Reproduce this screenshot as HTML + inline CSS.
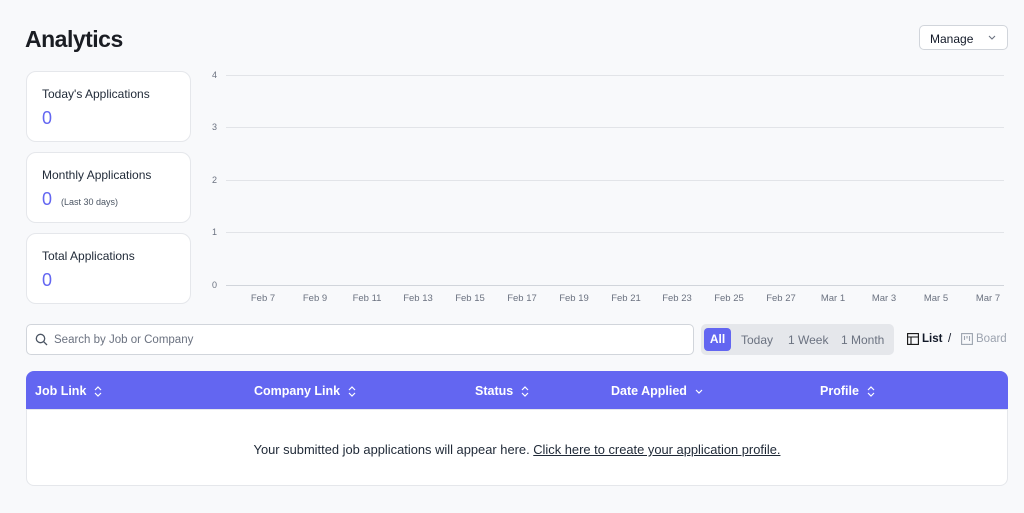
<!DOCTYPE html><html><head><style>
body{margin:0;width:1024px;height:513px;background:#f8f9fb;font-family:"Liberation Sans",sans-serif;position:relative;overflow:hidden;color:#111827}
.a{position:absolute}
.card{position:absolute;left:26px;width:165px;height:71px;background:#fff;border:1px solid #e5e7eb;border-radius:10px;box-sizing:border-box}
.card .t{position:absolute;left:15px;top:15px;font-size:12px;font-weight:500;color:#1f2937}
.card .n{position:absolute;left:15px;top:36px;font-size:18px;color:#6366f1}
.gl{position:absolute;left:226px;width:778px;height:1px;background:#e2e4e8}
.yl{position:absolute;left:212px;font-size:9px;color:#6b7280}
.xl{position:absolute;top:293px;font-size:9.5px;color:#6b7280;transform:translateX(-50%);white-space:nowrap}
.th{position:absolute;top:384px;color:#fff;font-size:12.5px;font-weight:bold;display:flex;align-items:center}
.th svg{margin-left:8px}
</style></head><body>
<div class="a" style="left:25px;top:26px;font-size:23px;font-weight:bold;letter-spacing:-0.5px;color:#1a1d23">Analytics</div>
<div class="a" style="left:919px;top:25px;width:89px;height:25px;background:#fff;border:1px solid #d1d5db;border-radius:5px;box-sizing:border-box;font-size:12px;padding:6px 0 0 10px">Manage<svg style="position:absolute;right:11px;top:9px" width="8" height="5"><path d="M1 1L4 4L7 1" fill="none" stroke="#6b7280" stroke-width="1.1"/></svg></div>
<div class="card" style="top:71px"><div class="t">Today's Applications</div><div class="n">0</div></div>
<div class="card" style="top:152px"><div class="t">Monthly Applications</div><div class="n">0 <span style="font-size:9px;color:#4b5563;margin-left:4px">(Last 30 days)</span></div></div>
<div class="card" style="top:233px"><div class="t">Total Applications</div><div class="n">0</div></div>
<div class="gl" style="top:75px"></div><div class="gl" style="top:127px"></div><div class="gl" style="top:180px"></div><div class="gl" style="top:232px"></div><div class="gl" style="top:285px;background:#d1d5db"></div>
<div class="yl" style="top:70px">4</div><div class="yl" style="top:122px">3</div><div class="yl" style="top:175px">2</div><div class="yl" style="top:227px">1</div><div class="yl" style="top:280px">0</div>
<div class="xl" style="left:263px">Feb 7</div><div class="xl" style="left:315px">Feb 9</div><div class="xl" style="left:367px">Feb 11</div><div class="xl" style="left:418px">Feb 13</div><div class="xl" style="left:470px">Feb 15</div><div class="xl" style="left:522px">Feb 17</div><div class="xl" style="left:574px">Feb 19</div><div class="xl" style="left:626px">Feb 21</div><div class="xl" style="left:677px">Feb 23</div><div class="xl" style="left:729px">Feb 25</div><div class="xl" style="left:781px">Feb 27</div><div class="xl" style="left:833px">Mar 1</div><div class="xl" style="left:884px">Mar 3</div><div class="xl" style="left:936px">Mar 5</div><div class="xl" style="left:988px">Mar 7</div>
<div class="a" style="left:26px;top:324px;width:668px;height:31px;background:#fff;border:1px solid #d1d5db;border-radius:5px;box-sizing:border-box"></div>
<svg class="a" style="left:35px;top:333px" width="13" height="13" viewBox="0 0 13 13"><circle cx="5.5" cy="5.5" r="4.2" fill="none" stroke="#4b5563" stroke-width="1.3"/><path d="M8.7 8.7L12 12" stroke="#4b5563" stroke-width="1.3"/></svg>
<div class="a" style="left:54px;top:334px;font-size:11.5px;color:#6b7280">Search by Job or Company</div>
<div class="a" style="left:701px;top:324px;width:193px;height:31px;background:#e5e7eb;border-radius:5px"></div>
<div class="a" style="left:704px;top:328px;width:27px;height:23px;background:#6366f1;border-radius:4px;color:#fff;font-size:12px;font-weight:bold;text-align:center;line-height:23px">All</div>
<div class="a" style="left:741px;top:333px;font-size:12px;color:#6b7280">Today</div>
<div class="a" style="left:788px;top:333px;font-size:12px;color:#6b7280">1 Week</div>
<div class="a" style="left:841px;top:333px;font-size:12px;color:#6b7280">1 Month</div>
<svg class="a" style="left:907px;top:333px" width="12" height="12"><rect x="0.6" y="0.6" width="10.8" height="10.8" fill="none" stroke="#111" stroke-width="1.1"/><path d="M0.6 4H11.4M4 4V11.4" stroke="#111" stroke-width="1.1"/></svg>
<div class="a" style="left:922px;top:333px;font-size:11.5px;font-weight:bold">List</div>
<div class="a" style="left:948px;top:333px;font-size:11.5px">/</div>
<svg class="a" style="left:961px;top:333px" width="12" height="12"><rect x="0.6" y="0.6" width="10.8" height="10.8" fill="none" stroke="#9ca3af" stroke-width="1.1"/><path d="M3.5 3V7M6 3V5.5M8.5 3V8" stroke="#9ca3af" stroke-width="1.1"/></svg>
<div class="a" style="left:976px;top:333px;font-size:11.5px;color:#9ca3af">Board</div>
<div class="a" style="left:26px;top:409px;width:982px;height:77px;background:#fff;border:1px solid #e5e7eb;border-radius:0 0 8px 8px;box-sizing:border-box"></div>
<div class="a" style="left:26px;top:371px;width:982px;height:38px;background:#6366f1;border-radius:8px 8px 0 0"></div>
<div class="th" style="left:35px">Job Link<svg width="8" height="11"><path d="M1 4L4 1L7 4M1 7L4 10L7 7" fill="none" stroke="#fff" stroke-width="1.2"/></svg></div>
<div class="th" style="left:254px">Company Link<svg width="8" height="11"><path d="M1 4L4 1L7 4M1 7L4 10L7 7" fill="none" stroke="#fff" stroke-width="1.2"/></svg></div>
<div class="th" style="left:475px">Status<svg width="8" height="11"><path d="M1 4L4 1L7 4M1 7L4 10L7 7" fill="none" stroke="#fff" stroke-width="1.2"/></svg></div>
<div class="th" style="left:611px">Date Applied<svg width="8" height="11"><path d="M1 4L4 7L7 4" fill="none" stroke="#fff" stroke-width="1.2"/></svg></div>
<div class="th" style="left:820px">Profile<svg width="8" height="11"><path d="M1 4L4 1L7 4M1 7L4 10L7 7" fill="none" stroke="#fff" stroke-width="1.2"/></svg></div>
<div class="a" style="left:0;width:1034px;top:442px;text-align:center;font-size:12.9px;color:#1f2937">Your submitted job applications will appear here. <u>Click here to create your application profile.</u></div>
</body></html>
